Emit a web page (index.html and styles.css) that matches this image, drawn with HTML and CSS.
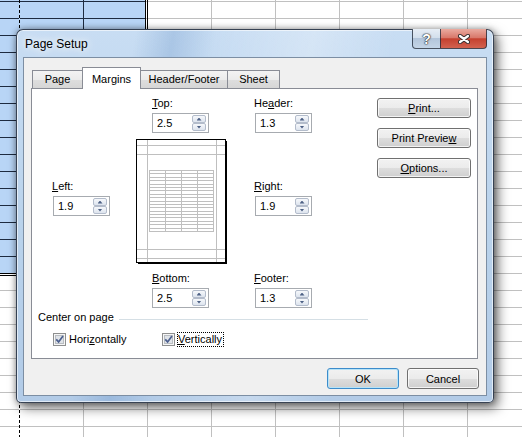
FILE: index.html
```html
<!DOCTYPE html>
<html lang="en">
<head>
<meta charset="UTF-8">
<meta name="viewport" content="width=device-width, initial-scale=1.0">
<title>Page Setup</title>
<link rel="stylesheet" href="styles.css">
</head>
<body>

<div class="sheet">
    <div class="selection"></div>

    <div class="dialog">
        <div class="titlebar">
            <span class="title">Page Setup</span>
            <div class="caption-buttons">
                <span class="cap-btn help">?</span>
                <span class="cap-btn close">
                    <svg width="12" height="10" viewBox="0 0 12 10">
                        <path d="M2 2l8 6M10 2l-8 6" stroke="#3a3030" stroke-width="4.2" stroke-linecap="round"/>
                        <path d="M2 2l8 6M10 2l-8 6" stroke="#fff" stroke-width="2.2" stroke-linecap="round"/>
                    </svg>
                </span>
            </div>
        </div>

        <div class="client">
            <div class="tabs">
                <span class="tab tab-page">Page</span>
                <span class="tab tab-margins active">Margins</span>
                <span class="tab tab-header">Header/Footer</span>
                <span class="tab tab-sheet">Sheet</span>
            </div>

            <div class="panel">
                <div class="margins">
                    <div class="field mid f-top">
                        <div class="label"><u>T</u>op:</div>
                        <div class="spin"><span class="value">2.5</span><span class="arrows"><i class="up"></i><i class="down"></i></span></div>
                    </div>
                    <div class="field f-header">
                        <div class="label">He<u>a</u>der:</div>
                        <div class="spin"><span class="value">1.3</span><span class="arrows"><i class="up"></i><i class="down"></i></span></div>
                    </div>

                    <div class="side-buttons">
                        <button class="btn"><u>P</u>rint...</button>
                        <button class="btn">Print Previe<u>w</u></button>
                        <button class="btn"><u>O</u>ptions...</button>
                    </div>

                    <div class="field side f-left">
                        <div class="label"><u>L</u>eft:</div>
                        <div class="spin"><span class="value">1.9</span><span class="arrows"><i class="up"></i><i class="down"></i></span></div>
                    </div>

                    <!-- small picture of the sheet: page edge, margins and a block of cells -->
                    <svg class="preview" width="91" height="125" shape-rendering="crispEdges">
                        <rect x="90" y="2" width="1" height="123" fill="#000"/>
                        <rect x="2" y="124" width="89" height="1" fill="#000"/>
                        <rect x="0.5" y="0.5" width="89" height="123" fill="#fff" stroke="#000"/>
                        <path d="M11.5 1V123M80.5 1V123M1 6.5H89M1 15.5H89M1 110.5H89M1 119.5H89" stroke="#bfbfbf" fill="none"/>
                        <path d="M13.5 31V93M29.5 31V93M45.5 31V93M61.5 31V93M77.5 31V93
                                 M13 31.5H78M13 34.5H78M13 38.5H78M13 41.5H78M13 45.5H78M13 48.5H78M13 51.5H78
                                 M13 55.5H78M13 58.5H78M13 62.5H78M13 65.5H78M13 68.5H78M13 72.5H78M13 75.5H78
                                 M13 78.5H78M13 82.5H78M13 85.5H78M13 89.5H78M13 92.5H78" stroke="#bfbfbf" fill="none"/>
                    </svg>

                    <div class="field side f-right">
                        <div class="label"><u>R</u>ight:</div>
                        <div class="spin"><span class="value">1.9</span><span class="arrows"><i class="up"></i><i class="down"></i></span></div>
                    </div>

                    <div class="field mid f-bottom">
                        <div class="label"><u>B</u>ottom:</div>
                        <div class="spin"><span class="value">2.5</span><span class="arrows"><i class="up"></i><i class="down"></i></span></div>
                    </div>
                    <div class="field f-footer">
                        <div class="label"><u>F</u>ooter:</div>
                        <div class="spin"><span class="value">1.3</span><span class="arrows"><i class="up"></i><i class="down"></i></span></div>
                    </div>
                </div>

                <div class="group">
                    <div class="legend"><span>Center on page</span><span class="rule"></span></div>
                    <div class="checks">
                        <label class="check">
                            <svg class="box" width="13" height="13" shape-rendering="crispEdges">
                                <rect x="0.5" y="0.5" width="12" height="12" fill="#f6f6f6" stroke="#8e8f8f"/>
                                <rect x="2.5" y="2.5" width="8" height="8" fill="#dfe3e8" stroke="#b9bdc2"/>
                                <path d="M3.2 6.3l2.4 2.6 4.4-6" stroke="#4b5f8e" stroke-width="1.7" fill="none" shape-rendering="auto"/>
                            </svg>
                            <span class="check-text">Hori<u>z</u>ontally</span>
                        </label>
                        <label class="check">
                            <svg class="box" width="13" height="13" shape-rendering="crispEdges">
                                <rect x="0.5" y="0.5" width="12" height="12" fill="#f6f6f6" stroke="#8e8f8f"/>
                                <rect x="2.5" y="2.5" width="8" height="8" fill="#dfe3e8" stroke="#b9bdc2"/>
                                <path d="M3.2 6.3l2.4 2.6 4.4-6" stroke="#4b5f8e" stroke-width="1.7" fill="none" shape-rendering="auto"/>
                            </svg>
                            <span class="check-text focus"><u>V</u>ertically</span>
                        </label>
                    </div>
                </div>
            </div>

            <div class="footer-buttons">
                <button class="btn wide default">OK</button>
                <button class="btn wide">Cancel</button>
            </div>
        </div>
    </div>
</div>

</body>
</html>
```

FILE: styles.css
```css
body {
    margin: 0;
    font-family: "Liberation Sans", Arial, sans-serif;
    font-size: 11px;
    color: #000;
    overflow: hidden;
}

/* worksheet behind the dialog: 64px columns, 17px rows, page break at x=19 */
.sheet {
    position: relative;
    height: 437px;
    background-color: #fff;
    background-image:
        linear-gradient(#000 3px, #fff 3px),
        linear-gradient(to right, #c0c0c0 1px, transparent 1px),
        linear-gradient(#c0c0c0 1px, transparent 1px);
    background-size: 1px 5px, 64px 17px, 64px 17px;
    background-position: 19px 0, 19px 1px, 19px 1px;
    background-repeat: repeat-y, repeat, repeat;
}
.selection {
    width: 145px;
    height: 273px;
    border-right: 3px double #000;
    border-bottom: 3px double #000;
    background-clip: padding-box;
    background-color: #b8d5f6;
    background-image:
        linear-gradient(#000 3px, #b8d5f6 3px),
        linear-gradient(to right, #1d2b40 1px, transparent 1px),
        linear-gradient(#1d2b40 1px, transparent 1px);
    background-size: 1px 5px, 64px 17px, 64px 17px;
    background-position: 19px 0, 19px 1px, 19px 1px;
    background-repeat: repeat-y, repeat, repeat;
}

/* aero window frame */
.dialog {
    position: absolute;
    left: 16px;
    top: 29px;
    width: 478px;
    height: 374px;
    box-sizing: border-box;
    padding: 0 6px 6px;
    border: 1px solid rgba(30, 40, 55, 0.85);
    border-radius: 7px 7px 5px 5px;
    background:
        linear-gradient(100deg, rgba(255,255,255,0) 22%, rgba(95,140,195,0.28) 29%, rgba(255,255,255,0) 37%, rgba(255,255,255,0.25) 55%, rgba(255,255,255,0) 70%),
        linear-gradient(#c8ddf3, #b9d2eb 55%, #b2cbe7);
    box-shadow: 4px 5px 12px rgba(0, 0, 0, 0.55), 0 0 6px rgba(0, 0, 0, 0.35), inset 0 0 0 1px rgba(255, 255, 255, 0.6);
    display: flex;
    flex-direction: column;
}
.titlebar {
    height: 27px;
    display: flex;
    justify-content: space-between;
    align-items: flex-start;
}
.title {
    padding: 1px 0 0 2px;
    line-height: 27px;
    font-size: 12px;
    text-shadow: 0 0 6px #fff, 0 0 12px rgba(255, 255, 255, 0.9);
}
.caption-buttons {
    display: flex;
    margin-top: -1px;
}
.cap-btn {
    height: 20px;
    box-sizing: border-box;
    display: flex;
    align-items: center;
    justify-content: center;
    border: 1px solid rgba(35, 45, 60, 0.8);
    border-top: none;
}
.help {
    width: 28px;
    border-right: none;
    border-radius: 0 0 0 4px;
    background: linear-gradient(#e6edf5, #d3dfec 45%, #b3c5da 50%, #c4d5e7);
    color: #fff;
    font-weight: bold;
    font-size: 14px;
    text-shadow: 0 0 1px #2c2c2c, 0 0 1px #2c2c2c, 0 0 2px #2c2c2c;
}
.close {
    width: 47px;
    border-radius: 0 0 4px 0;
    background: linear-gradient(#eaaba0, #d9796b 45%, #c5412f 52%, #d2624f);
}

/* dialog body */
.client {
    flex: 1;
    background: #f0f0f0;
    border: 1px solid #7c8ea3;
    padding: 9px 8px 6px 7px;
    display: flex;
    flex-direction: column;
}
.tabs {
    display: flex;
    align-items: flex-end;
    padding-left: 1px;
}
.tab {
    box-sizing: border-box;
    height: 18px;
    margin-right: -1px;
    border: 1px solid #898c95;
    border-bottom: none;
    background: linear-gradient(#f3f3f3, #ebebeb 50%, #dedede 51%, #d6d6d6);
    line-height: 17px;
    text-align: center;
}
.tab.active {
    position: relative;
    z-index: 1;
    height: 22px;
    margin-bottom: -1px;
    padding-top: 3px;
    background: #fff;
}
.tab-page { width: 51px; }
.tab-margins { width: 59px; }
.tab-header { width: 88px; }
.tab-sheet { width: 53px; }

.panel {
    height: 271px;
    box-sizing: border-box;
    border: 1px solid #898c95;
    background: #fff;
}

.margins {
    display: grid;
    grid-template-columns: 20px 58px 26px 92px 26px 58px 65px 94px;
    grid-template-rows: 42px 133px 36px;
    padding-top: 8px;
}
.label {
    line-height: 13px;
    margin-bottom: 3px;
}
.field.mid { grid-column: 4; margin-left: 16px; }
.field.mid .spin { margin-left: 0; }
.field.side { grid-row: 2; margin-top: 41px; }
.f-top { grid-row: 1; }
.f-header { grid-row: 1; grid-column: 6; }
.f-left { grid-column: 2; }
.f-right { grid-column: 6; }
.f-bottom { grid-row: 3; }
.f-footer { grid-row: 3; grid-column: 6; }
.preview { grid-row: 2; grid-column: 4; }

.spin {
    display: flex;
    width: 57px;
    height: 20px;
    box-sizing: border-box;
    margin-left: 1px;
    border: 1px solid #a7abb0;
    background: #fff;
}
.value {
    flex: 1;
    padding-left: 4px;
    line-height: 18px;
}
.arrows {
    display: flex;
    flex-direction: column;
    width: 14px;
    margin: 1px 2px 1px 0;
}
.arrows i {
    flex: 1;
    display: flex;
    align-items: center;
    justify-content: center;
    border: 1px solid #b3bccb;
    border-radius: 2px;
    background: linear-gradient(#f6f8fb, #dde4ee);
}
.arrows i::after {
    content: "";
    width: 5px;
    height: 3px;
    background: #4d6185;
}
.arrows .up::after { clip-path: polygon(50% 0, 100% 100%, 0 100%); }
.arrows .down::after { clip-path: polygon(0 0, 100% 0, 50% 100%); }

.side-buttons {
    grid-column: 8;
    grid-row: 1 / 3;
    align-self: start;
    margin-top: 1px;
    display: flex;
    flex-direction: column;
    gap: 10px;
}
.btn {
    width: 94px;
    height: 20px;
    padding: 0;
    font-family: "Liberation Sans", Arial, sans-serif;
    font-size: 11px;
    line-height: 18px;
    color: #000;
    border: 1px solid #707070;
    border-radius: 3px;
    background: linear-gradient(#f2f2f2, #ebebeb 50%, #dddddd 51%, #cfcfcf);
    box-shadow: inset 0 0 0 1px rgba(255, 255, 255, 0.75);
}
.btn.wide {
    width: 72px;
    height: 21px;
}
.btn.default {
    border-color: #3c8ccb;
    box-shadow: inset 0 0 0 1px #b6e3f8;
}

/* Center on page */
.group {
    padding-left: 6px;
}
.legend {
    display: flex;
    align-items: center;
    margin-top: 3px;
    line-height: 13px;
}
.rule {
    width: 249px;
    height: 1px;
    margin: 3px 0 0 5px;
    background: #d5dfe5;
}
.checks {
    display: flex;
    align-items: center;
    margin-top: 8px;
    padding-left: 15px;
    line-height: 13px;
}
.check {
    display: flex;
    align-items: center;
    width: 109px;
}
.check-text {
    margin-left: 3px;
}
.check-text.focus {
    margin-left: 2px;
    padding-right: 1px;
    border: 1px dotted #000;
}

.footer-buttons {
    display: flex;
    justify-content: flex-end;
    gap: 8px;
    padding-top: 9px;
    margin-right: -1px;
}
```
